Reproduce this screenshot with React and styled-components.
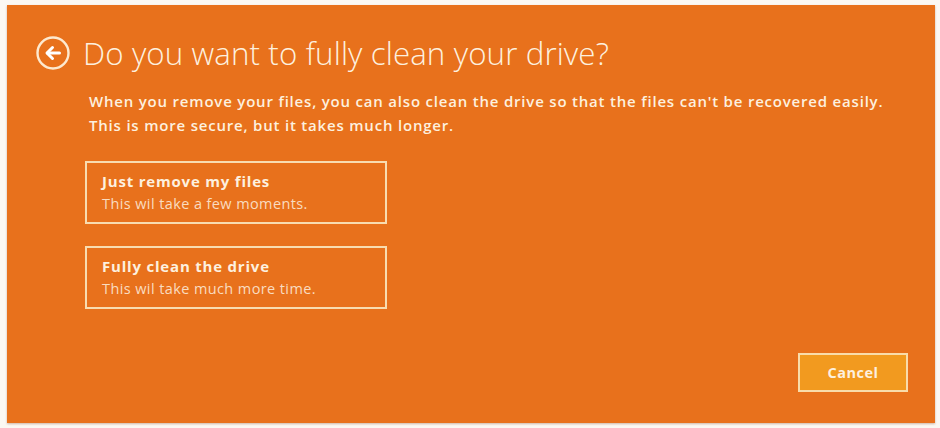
import React from 'react'
import styled, { createGlobalStyle } from 'styled-components'

const GlobalStyle = createGlobalStyle`
  html, body {
    margin: 0;
    padding: 0;
    background: #fbf8f3;
  }
  body {
    font-family: 'Open Sans', 'Liberation Sans', sans-serif;
  }
`

const Page = styled.div`
  width: 940px;
  height: 428px;
  padding: 5px 5px 5px 7px;
  box-sizing: border-box;
`

const Panel = styled.div`
  height: 418px;
  background: #e8711c;
  box-shadow: 0 1px 2px rgba(120, 60, 20, 0.35);
  padding: 20px 27px 0 28px;
  box-sizing: border-box;
  display: flex;
  flex-direction: column;
  color: #fdf0df;
`

const Header = styled.div`
  display: flex;
  align-items: center;
  gap: 12px;
  height: 56px;
`

const BackButton = styled.button`
  width: 36px;
  height: 36px;
  padding: 0;
  border: none;
  background: none;
  display: flex;
  align-items: center;
  justify-content: center;
  cursor: pointer;
`

const Title = styled.h1`
  margin: 0;
  font-size: 31.3px;
  font-weight: 300;
  letter-spacing: 0.1px;
  color: #fdf0df;
`

const Content = styled.div`
  padding-left: 54px;
  display: flex;
  flex-direction: column;
  flex: 1;
`

const Description = styled.p`
  margin: 8px 0 0;
  font-size: 15px;
  line-height: 24px;
  font-weight: 600;
  letter-spacing: 0.8px;
  white-space: nowrap;
`

const Options = styled.div`
  margin-top: 24px;
  margin-left: -4px;
  display: flex;
  flex-direction: column;
  gap: 22px;
`

const Option = styled.button`
  width: 302px;
  height: 63px;
  box-sizing: border-box;
  border: 2px solid #f8dcb0;
  background: transparent;
  color: #fdf0df;
  text-align: left;
  padding: 8px 15px;
  font-family: inherit;
  cursor: pointer;
  display: flex;
  flex-direction: column;
  gap: 3px;
`

const OptionTitle = styled.span`
  font-size: 15px;
  font-weight: 700;
  letter-spacing: 0.8px;
`

const OptionNote = styled.span`
  font-size: 14.5px;
  font-weight: 400;
  color: #f9dcc0;
  letter-spacing: 0.4px;
`

const Footer = styled.div`
  margin-top: auto;
  display: flex;
  justify-content: flex-end;
  padding-bottom: 31px;
`

const CancelButton = styled.button`
  width: 110px;
  height: 39px;
  border: 2px solid #f9dcaa;
  background: #f29a1f;
  color: #fdf0df;
  font-family: inherit;
  font-size: 14.5px;
  font-weight: 700;
  letter-spacing: 0.5px;
  cursor: pointer;
`

const BackIcon = () => (
  <svg width="36" height="36" viewBox="0 0 36 36" fill="none">
    <circle cx="18" cy="18" r="15.5" stroke="#fde9cf" strokeWidth="2.4" />
    <path d="M24.5 18H12.5" stroke="#fff" strokeWidth="3" strokeLinecap="round" />
    <path d="M17.5 12.5L12 18l5.5 5.5" stroke="#fff" strokeWidth="3" strokeLinecap="round" strokeLinejoin="round" />
  </svg>
)

const choices = [
  { title: 'Just remove my files', note: 'This wil take a few moments.' },
  { title: 'Fully clean the drive', note: 'This wil take much more time.' },
]

export default function App() {
  return (
    <>
      <GlobalStyle />
      <Page>
        <Panel>
          <Header>
            <BackButton aria-label="Back">
              <BackIcon />
            </BackButton>
            <Title>Do you want to fully clean your drive?</Title>
          </Header>
          <Content>
            <Description>
              When you remove your files, you can also clean the drive so that the files can't be recovered easily.
              <br />
              This is more secure, but it takes much longer.
            </Description>
            <Options>
              {choices.map(c => (
                <Option key={c.title}>
                  <OptionTitle>{c.title}</OptionTitle>
                  <OptionNote>{c.note}</OptionNote>
                </Option>
              ))}
            </Options>
          </Content>
          <Footer>
            <CancelButton>Cancel</CancelButton>
          </Footer>
        </Panel>
      </Page>
    </>
  )
}
